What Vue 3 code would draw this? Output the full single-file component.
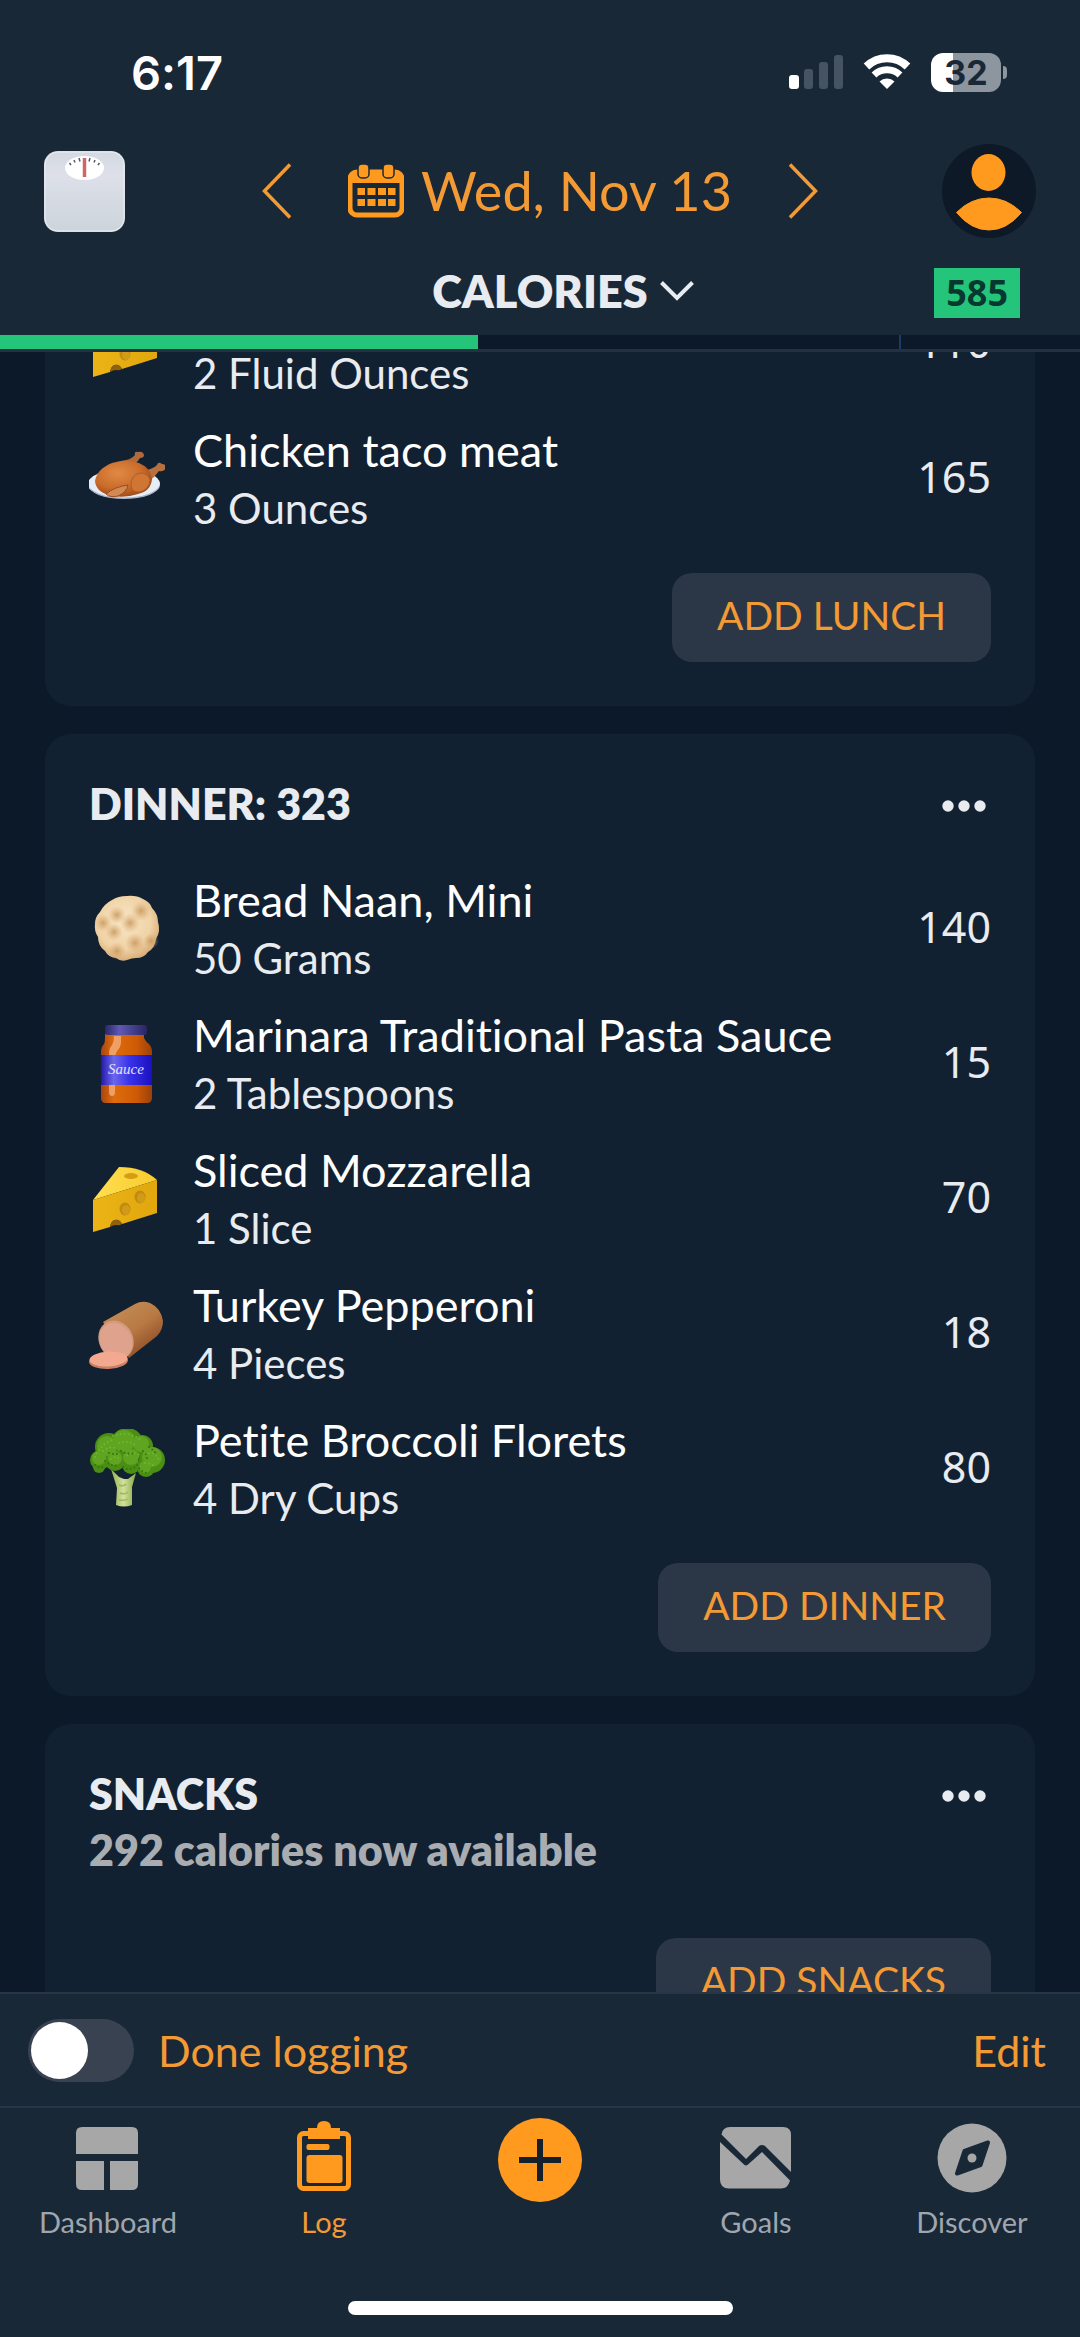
<script setup>
import { ref } from 'vue'

const doneLogging = ref(false)

const meals = [
  {
    id: 'lunch',
    items: [
      { icon: 'cheese', name: '', amount: '2 Fluid Ounces', calories: 110 },
      { icon: 'chicken', name: 'Chicken taco meat', amount: '3 Ounces', calories: 165 },
    ],
    action: 'ADD LUNCH',
  },
  {
    id: 'dinner',
    title: 'DINNER: 323',
    items: [
      { icon: 'naan', name: 'Bread Naan, Mini', amount: '50 Grams', calories: 140 },
      { icon: 'sauce', name: 'Marinara Traditional Pasta Sauce', amount: '2 Tablespoons', calories: 15 },
      { icon: 'cheese', name: 'Sliced Mozzarella', amount: '1 Slice', calories: 70 },
      { icon: 'sausage', name: 'Turkey Pepperoni', amount: '4 Pieces', calories: 18 },
      { icon: 'broccoli', name: 'Petite Broccoli Florets', amount: '4 Dry Cups', calories: 80 },
    ],
    action: 'ADD DINNER',
  },
  {
    id: 'snacks',
    title: 'SNACKS',
    note: '292 calories now available',
    items: [],
    action: 'ADD SNACKS',
  },
]

const budget = { eaten: 44.3, mark: 83.2 }
</script>

<template>
  <div class="app">
    <svg class="defs" width="0" height="0" aria-hidden="true">
      <defs>
        <linearGradient id="scaleBody" x1="0" y1="0" x2="0" y2="1">
          <stop offset="0" stop-color="#d3d8e1" />
          <stop offset=".3" stop-color="#dde0e9" />
          <stop offset="1" stop-color="#ccd4da" />
        </linearGradient>
        <radialGradient id="naanFill" cx=".45" cy=".4" r=".6">
          <stop offset="0" stop-color="#f8e6c6" />
          <stop offset=".7" stop-color="#f0d3a6" />
          <stop offset="1" stop-color="#d9ae78" />
        </radialGradient>
        <radialGradient id="naanSpot">
          <stop offset="0" stop-color="#c8965d" stop-opacity=".85" />
          <stop offset="1" stop-color="#d9ab74" stop-opacity="0" />
        </radialGradient>
        <linearGradient id="jarSauce">
          <stop offset="0" stop-color="#a94410" />
          <stop offset=".25" stop-color="#de6c0c" />
          <stop offset=".7" stop-color="#cf5a05" />
          <stop offset="1" stop-color="#9c4009" />
        </linearGradient>
        <linearGradient id="jarLabel">
          <stop offset="0" stop-color="#2318a8" />
          <stop offset=".25" stop-color="#6c67ec" />
          <stop offset=".55" stop-color="#3a33ea" />
          <stop offset="1" stop-color="#1a10c0" />
        </linearGradient>
        <linearGradient id="jarLid">
          <stop offset="0" stop-color="#2c2668" />
          <stop offset=".35" stop-color="#5f59b4" />
          <stop offset="1" stop-color="#2a2463" />
        </linearGradient>
        <linearGradient id="cheeseTop" x1="0" y1="0" x2="1" y2="0">
          <stop offset="0" stop-color="#ffdf52" />
          <stop offset="1" stop-color="#f8cb2c" />
        </linearGradient>
        <linearGradient id="cheeseSide" x1="0" y1="0" x2="1" y2="0">
          <stop offset="0" stop-color="#ecb416" />
          <stop offset="1" stop-color="#e0a70e" />
        </linearGradient>
        <linearGradient id="sausageSkin" x1=".2" y1=".1" x2=".8" y2=".9">
          <stop offset="0" stop-color="#c28b55" />
          <stop offset=".5" stop-color="#b97a45" />
          <stop offset="1" stop-color="#8a4a24" />
        </linearGradient>
        <linearGradient id="stalk">
          <stop offset="0" stop-color="#8fb24d" />
          <stop offset=".5" stop-color="#d3e09b" />
          <stop offset="1" stop-color="#86a945" />
        </linearGradient>
        <radialGradient id="roast" cx=".4" cy=".35" r=".7">
          <stop offset="0" stop-color="#e08a45" />
          <stop offset=".6" stop-color="#cb6c2a" />
          <stop offset="1" stop-color="#98481a" />
        </radialGradient>
      </defs>
    </svg>

    <header class="header">
      <div class="status">
        <span class="clock">6:17</span>
        <div class="indicators">
          <svg width="54" height="36" viewBox="0 0 54 36" aria-hidden="true">
            <rect x="0" y="21" width="10" height="14" rx="3" fill="#fff" />
            <rect x="15" y="15" width="9" height="20" rx="3" fill="#465362" />
            <rect x="30" y="8" width="9" height="27" rx="3" fill="#465362" />
            <rect x="45" y="1" width="9" height="34" rx="3" fill="#465362" />
          </svg>
          <svg width="48" height="36" viewBox="0 0 48 36" fill="none" aria-hidden="true">
            <path d="M3.500 12.500a29.500 29.500 0 0 1 41 0" stroke="#fff" stroke-width="8" />
            <path d="M11 21a19 19 0 0 1 26 0" stroke="#fff" stroke-width="7" />
            <path d="M24 35l-7.500-7.500a11 11 0 0 1 15 0z" fill="#fff" />
          </svg>
          <div class="battery"><span>32</span></div>
        </div>
      </div>

      <div class="daterow">
        <button class="plain scale" aria-label="Weigh in">
          <svg width="81" height="81" viewBox="0 0 81 81" aria-hidden="true">
            <rect width="81" height="81" rx="14" fill="url(#scaleBody)" />
            <rect x="1" y="1" width="79" height="79" rx="13" fill="none" stroke="#e9ecf2" stroke-width="1" />
            <ellipse cx="40.500" cy="17" rx="19.500" ry="12" fill="#fff" />
            <path d="M27 14l-1.500-2M31 11.500l-1-2.500M36 10.500l-1-3.500M45 10.500l1-3.500M50 11.500l1-2.500M54 14l1.500-2" stroke="#545b66" stroke-width="1.500" />
            <path d="M40.500 7v19" stroke="#d3646a" stroke-width="3.500" />
          </svg>
        </button>
        <div class="datepick">
          <button class="plain" aria-label="Previous day">
            <svg width="30" height="56" viewBox="0 0 30 56" fill="none" aria-hidden="true">
              <path d="M28 1.500L2.500 28 28 54.500" stroke="#f39a35" stroke-width="3.500" />
            </svg>
          </button>
          <button class="plain date">
            <svg width="56" height="54" viewBox="0 0 56 54" aria-hidden="true">
              <rect x="2" y="8" width="52" height="43" rx="7" fill="none" stroke="#ff9a1f" stroke-width="5" />
              <path d="M2 19v-6q0-7 7-7h38q7 0 7 7v6z" fill="#ff9a1f" />
              <g fill="#ff9a1f" stroke="#192837" stroke-width="1.500">
                <rect x="10" y="0" width="11" height="14" rx="4" />
                <rect x="35" y="0" width="11" height="14" rx="4" />
              </g>
              <path d="M9.500 24h7.500v7h-7.500zM19.500 24h8v7h-8zM30 24h8v7h-8zM40 24h7.500v7h-7.500zM9.500 35h7.500v7h-7.500zM19.500 35h8v7h-8zM30 35h8v7h-8zM40 35h7.500v7h-7.500z" fill="#ff9a1f" />
            </svg>
            <span>Wed, Nov 13</span>
          </button>
          <button class="plain" aria-label="Next day">
            <svg width="30" height="56" viewBox="0 0 30 56" fill="none" aria-hidden="true">
              <path d="M2 1.500L27.500 28 2 54.500" stroke="#f39a35" stroke-width="3.500" />
            </svg>
          </button>
        </div>
        <button class="plain avatar" aria-label="Profile">
          <svg width="94" height="94" viewBox="0 0 94 94" aria-hidden="true">
            <circle cx="47" cy="47" r="47" fill="#0d1927" />
            <ellipse cx="46.500" cy="28.500" rx="17" ry="18.500" fill="#ff9a1f" />
            <path d="M14.500 68.500Q29 54 47 54t32.500 14.500Q65 86 47 86T14.500 68.500z" fill="#ff9a1f" stroke="#ff9a1f" stroke-linejoin="round" />
          </svg>
        </button>
      </div>

      <div class="metric">
        <button class="plain metric-name">
          <span>CALORIES</span>
          <svg width="34" height="20" viewBox="0 0 34 20" fill="none" aria-hidden="true">
            <path d="M1.500 1.500L17 17 32.500 1.500" stroke="#e8ebef" stroke-width="4" />
          </svg>
        </button>
        <span class="remaining">585</span>
      </div>

      <div class="progress">
        <div class="progress-fill" :style="{ width: budget.eaten + '%' }"></div>
        <div class="progress-mark" :style="{ left: budget.mark + '%' }"></div>
      </div>
    </header>

    <main class="log">
      <div class="cards">
        <section v-for="meal in meals" :key="meal.id" class="card">
          <div v-if="meal.title" class="card-head">
            <div>
              <h2>{{ meal.title }}</h2>
              <p v-if="meal.note">{{ meal.note }}</p>
            </div>
            <button class="plain more" aria-label="More options">
              <svg width="44" height="12" viewBox="0 0 44 12" fill="#e8ebef" aria-hidden="true">
                <circle cx="6" cy="6" r="5.700" />
                <circle cx="22" cy="6" r="5.700" />
                <circle cx="38" cy="6" r="5.700" />
              </svg>
            </button>
          </div>

          <ul v-if="meal.items.length" class="items">
            <li v-for="item in meal.items" :key="item.amount" class="item">
              <svg class="food" width="76" height="80" viewBox="0 0 76 80" aria-hidden="true">
                <g v-if="item.icon === 'naan'">
                  <path d="M38 7q9-1 16 3 7 3 9 9 6 6 6 14 3 9-2 17-1 9-8 13-4 6-12 6-4 0-9 2-6 2-11-2-8-1-11-7-7-5-7-14-4-6-3-13 0-7 5-12 4-8 12-12 6-4 15-4z" fill="url(#naanFill)" />
                  <circle cx="28" cy="26" r="9" fill="url(#naanSpot)" />
                  <circle cx="52" cy="22" r="10" fill="url(#naanSpot)" />
                  <circle cx="14" cy="34" r="9" fill="url(#naanSpot)" />
                  <circle cx="41" cy="34" r="10" fill="url(#naanSpot)" />
                  <circle cx="25" cy="43" r="9" fill="url(#naanSpot)" />
                  <circle cx="46" cy="54" r="10" fill="url(#naanSpot)" />
                  <circle cx="28" cy="62" r="9" fill="url(#naanSpot)" />
                  <circle cx="62" cy="52" r="8" fill="url(#naanSpot)" />
                </g>
                <g v-else-if="item.icon === 'sauce'">
                  <path d="M16 10h39v4q2 4 5 6 3 3 3 8v46q0 5-5 5H17q-5 0-5-5V28q0-5 3-8 1-2 1-6z" fill="url(#jarSauce)" />
                  <path d="M25 12h7v6q0 5-4 9-2 3-2 8v33q0 4-3 4t-3-4V30q0-6 3-9 2-3 2-9z" fill="#f6b184" opacity=".75" />
                  <rect x="12" y="31" width="51" height="30" fill="url(#jarLabel)" />
                  <rect x="16" y="1" width="42" height="10" rx="3" fill="url(#jarLid)" />
                  <text x="37" y="50" class="jar-text">Sauce</text>
                </g>
                <g v-else-if="item.icon === 'cheese'">
                  <path d="M30 8Q54 8 68 21L4 41z" fill="url(#cheeseTop)" />
                  <path d="M4 41l64-20v33l-35 11q-3-5-7-4-4 1-5 7L4 73z" fill="url(#cheeseSide)" />
                  <path d="M21 68q1-6 5-7 4-1 7 4-3 2-6 1-3 0-6 2z" fill="#8f620b" />
                  <ellipse cx="42" cy="17" rx="7" ry="3" fill="#d49d15" />
                  <ellipse cx="51" cy="38" rx="5.500" ry="6.500" fill="#c18a12" />
                  <ellipse cx="36" cy="50" rx="5.500" ry="6.500" fill="#c18a12" />
                  <ellipse cx="52" cy="39" rx="4" ry="5" fill="#d19a17" />
                  <ellipse cx="37" cy="51" rx="4" ry="5" fill="#d19a17" />
                </g>
                <g v-else-if="item.icon === 'sausage'">
                  <path d="M14 28L46 10q7-4 15-1 11 5 13 18 0 9-6 15L40 64z" fill="url(#sausageSkin)" />
                  <ellipse cx="27" cy="46" rx="17" ry="20" transform="rotate(-28 27 46)" fill="#d59b80" />
                  <ellipse cx="27" cy="47" rx="15.500" ry="18.500" transform="rotate(-28 27 47)" fill="#dfa28c" />
                  <ellipse cx="19.500" cy="67" rx="19.500" ry="8" transform="rotate(-3 19 67)" fill="#c97f62" />
                  <ellipse cx="19.500" cy="65" rx="19" ry="7.500" transform="rotate(-3 19 65)" fill="#f2a98f" />
                </g>
                <g v-else-if="item.icon === 'broccoli'">
                  <path d="M22 40l8 8 5 2h4l8-6-4 14 0 18q-8 3-16 0l1-17z" fill="url(#stalk)" />
                  <path d="M30 56q5 2 7-1M31 64q5 2 8-1M30 71q6 1 9-1" fill="none" stroke="#9db862" stroke-width="1.500" />
                  <g fill="#4a8f14">
                    <circle cx="11" cy="31" r="10" />
                    <circle cx="10" cy="38" r="6" />
                    <circle cx="20" cy="18" r="14" />
                    <circle cx="38" cy="16" r="17" />
                    <circle cx="53" cy="17" r="11" />
                    <circle cx="63" cy="31" r="13" />
                    <circle cx="57" cy="39" r="9" />
                    <circle cx="42" cy="36" r="9" />
                    <circle cx="26" cy="32" r="10" />
                  </g>
                  <g fill="#5fa522">
                    <circle cx="18" cy="17" r="10" />
                    <circle cx="35" cy="12" r="11" />
                    <circle cx="52" cy="15" r="8" />
                    <circle cx="63" cy="28" r="10" />
                    <circle cx="10" cy="29" r="7" />
                    <circle cx="42" cy="28" r="8" />
                    <circle cx="26" cy="29" r="7" />
                    <circle cx="56" cy="38" r="6" />
                  </g>
                  <g fill="none" stroke="#74b52f" stroke-width="2" stroke-linecap="round" stroke-dasharray="0 4">
                    <path d="M6 28q6-14 20-18M24 7q14-6 28 4M30 14q10-4 18 4M56 25q9-4 14 6M14 22q8-6 14-2M38 26q6-4 12 0M22 30q4-4 9 0M56 34q6 0 9 3" />
                  </g>
                  <g fill="none" stroke="#37740f" stroke-width="2" stroke-linecap="round" stroke-dasharray="0 4">
                    <path d="M16 32q6 6 14 4M32 22q6 4 14 2M48 36q4 8 12 8M6 36q4 4 8 2M54 22q4 4 4 8M20 24q6 2 10 0M60 18q6 4 8 8M34 38q6 4 12 0" />
                  </g>
                </g>
                <g v-else>
                  <ellipse cx="35" cy="46" rx="36" ry="14" fill="#a9b6c8" />
                  <ellipse cx="35" cy="44.500" rx="36" ry="14" fill="#e6edf6" />
                  <path d="M32 22q10-1 14-6-1-4 3-3 5-1 6 3 0 3-4 3-4 7-12 9z" fill="#b16a3c" />
                  <path d="M54 32q10-2 14-6 1-4 5-1 4 0 4 4-2 4-7 3-4 6-11 11z" fill="#b9703f" />
                  <path d="M6 42q2-12 17-18 15-5 27 0 12 5 13 16-1 12-14 15-12 4-25 2-17-3-18-15z" fill="url(#roast)" />
                  <path d="M42 46q0-10 9-12 8 0 10 7-1 10-11 12-8 0-8-7z" fill="#cf7634" stroke="#b05d28" />
                  <path d="M17 55q8-7 22-9-1 7-10 11-8 2-12-2z" fill="#d28a54" stroke="#9a4c1d" />
                </g>
              </svg>
              <div class="item-text">
                <span class="item-name">{{ item.name }}</span>
                <span class="item-amount">{{ item.amount }}</span>
              </div>
              <span class="item-calories">{{ item.calories }}</span>
            </li>
          </ul>

          <button class="add">{{ meal.action }}</button>
        </section>
      </div>
    </main>

    <footer>
      <div class="actions">
        <label class="toggle">
          <input v-model="doneLogging" type="checkbox" role="switch" />
          <span>Done logging</span>
        </label>
        <button class="plain edit">Edit</button>
      </div>

      <nav class="tabs">
        <a href="#dashboard" class="tab">
          <svg width="84" height="84" viewBox="0 0 84 84" fill="#a7a7a7" aria-hidden="true">
            <path d="M10 36V15q0-6 6-6h50q6 0 6 6v21zM10 43h28v29H16q-6 0-6-6zM44 43h28v23q0 6-6 6H44z" />
          </svg>
          <span>Dashboard</span>
        </a>
        <a href="#log" class="tab active" aria-current="page">
          <svg width="84" height="84" viewBox="0 0 84 84" fill="#ff9a1f" aria-hidden="true">
            <rect x="17.500" y="15.500" width="49" height="55" rx="4" fill="none" stroke="#ff9a1f" stroke-width="5" />
            <path d="M26 10h9q0-7 7-7t7 7h9v11H26z" />
            <rect x="24.500" y="26" width="23" height="6" rx="2" />
            <rect x="24.500" y="37" width="36" height="28" rx="3" />
          </svg>
          <span>Log</span>
        </a>
        <a href="#add" class="tab" aria-label="Add food">
          <svg width="84" height="84" viewBox="0 0 84 84" aria-hidden="true">
            <circle cx="42" cy="42" r="42" fill="#ff9a1f" />
            <path d="M42 21v42M21 42h42" stroke="#14202c" stroke-width="6" />
          </svg>
        </a>
        <a href="#goals" class="tab">
          <svg width="84" height="84" viewBox="0 0 84 84" fill="#a7a7a7" aria-hidden="true">
            <path d="M7.500 16.500Q8.500 9 16 9h53q8 0 8 8v37L51 28q-3-2-6 0L32 41z" />
            <path d="M6 24l24 22.500q2 2 4 0L48 34l28 28.500q-2 8-9 8H15q-9 0-9-9z" />
          </svg>
          <span>Goals</span>
        </a>
        <a href="#discover" class="tab">
          <svg width="84" height="84" viewBox="0 0 84 84" aria-hidden="true">
            <circle cx="42" cy="40" r="34.500" fill="#a7a7a7" />
            <path d="M58 24.500L50.500 47 27 55.500 34.500 33z" fill="#192837" stroke="#192837" stroke-width="4" stroke-linejoin="round" />
            <circle cx="42" cy="40" r="4.500" fill="#a7a7a7" />
          </svg>
          <span>Discover</span>
        </a>
      </nav>
      <div class="home-bar"></div>
    </footer>
  </div>
</template>

<style>
body {
  margin: 0;
  background: #0c1928;
}
</style>

<style scoped>
.app {
  display: flex;
  flex-direction: column;
  height: 100vh;
  overflow: hidden;
  background: #0c1928;
  color: #e8ebef;
  font-family: Lato, "Noto Sans", sans-serif;
  font-variant-ligatures: none;
}

.defs {
  position: absolute;
}

svg {
  display: block;
  flex: none;
}

.plain {
  padding: 0;
  border: 0;
  background: none;
  color: inherit;
  font: inherit;
  cursor: pointer;
}

.header {
  position: relative;
  flex: none;
  background: #192837;
  border-bottom: 3px solid #233243;
}

.status {
  display: flex;
  align-items: center;
  justify-content: space-between;
  height: 144px;
  padding: 0 79px 0 131px;
  color: #fff;
  font-family: Inter, sans-serif;
}

.clock {
  font-size: 47px;
  font-weight: 600;
}

.indicators {
  display: flex;
  align-items: center;
  gap: 20px;
}

.battery {
  position: relative;
  width: 70px;
  height: 39px;
  border-radius: 12px;
  background: linear-gradient(90deg, #fff 32%, #8d959f 32%);
  color: #192837;
  font-size: 34px;
  font-weight: 700;
  line-height: 39px;
  text-align: center;
}

.battery::after {
  content: "";
  position: absolute;
  top: 13px;
  right: -6px;
  width: 4px;
  height: 13px;
  border-radius: 0 6px 6px 0;
  background: #8d959f;
}

.daterow {
  display: grid;
  grid-template-columns: 1fr auto 1fr;
  align-items: center;
  padding: 0 44px;
}

.datepick {
  display: flex;
  align-items: center;
  gap: 56px;
}

.date {
  display: flex;
  align-items: center;
  gap: 17px;
  color: #f39a35;
  font-size: 54px;
  line-height: 64px;
}

.scale {
  justify-self: start;
}

.avatar {
  justify-self: end;
}

.metric {
  display: grid;
  grid-template-columns: 1fr auto 1fr;
  align-items: center;
  padding: 30px 60px 17px;
}

.metric-name {
  display: flex;
  align-items: center;
  gap: 12px;
  grid-column: 2;
  padding: 0 0 4px 46px;
  font-size: 45px;
  font-weight: 800;
  line-height: 44px;
}

.remaining {
  justify-self: end;
  padding: 0 12px;
  background: #24c57a;
  color: #07382f;
  font-family: "Noto Sans", sans-serif;
  font-size: 36px;
  font-weight: 700;
  line-height: 50px;
}

.progress {
  position: relative;
  height: 14px;
  background: #0c1928;
}

.progress-fill {
  height: 100%;
  background: #24c57a;
}

.progress-mark {
  position: absolute;
  top: 0;
  width: 2px;
  height: 100%;
  background: #1d3a68;
}

.log {
  flex: 1;
  min-height: 0;
  overflow: hidden;
}

.cards {
  display: flex;
  flex-direction: column;
  gap: 28px;
  margin-top: -76px;
  padding: 0 45px;
}

.card {
  display: flex;
  flex-direction: column;
  padding: 44px;
  border-radius: 26px;
  background: #122131;
}

.card:first-child {
  padding-top: 0;
}

.card-head {
  display: flex;
  align-items: flex-start;
  justify-content: space-between;
  margin-bottom: 31px;
}

h2,
p {
  margin: 0;
  font-size: 43px;
  font-weight: 800;
}

h2 {
  line-height: 52px;
}

p {
  color: #a9adb1;
  line-height: 60px;
}

.more {
  padding: 22px 5px 10px;
}

.items {
  margin: 0;
  padding: 0;
  list-style: none;
}

.item {
  display: flex;
  align-items: center;
  height: 135px;
}

.item-text {
  display: flex;
  flex: 1;
  flex-direction: column;
  margin-left: 28px;
}

.item-name {
  min-height: 58px;
  color: #fff;
  font-size: 45px;
  line-height: 58px;
}

.item-amount {
  font-size: 42px;
  line-height: 58px;
}

.item-calories {
  padding-bottom: 5px;
  font-family: "Noto Sans", sans-serif;
  font-size: 43px;
}

.jar-text {
  fill: #e4e4ff;
  font-family: "Liberation Serif", serif;
  font-size: 15px;
  font-style: italic;
  text-anchor: middle;
}

.add {
  align-self: flex-end;
  height: 89px;
  margin-top: 27px;
  padding: 0 45px 5px;
  border: 0;
  border-radius: 20px;
  background: #2b3746;
  color: #f39a35;
  font-family: inherit;
  font-size: 39px;
  cursor: pointer;
}

footer {
  flex: none;
  background: #192837;
}

.actions {
  display: flex;
  align-items: center;
  justify-content: space-between;
  height: 112px;
  padding: 0 34px 0 28px;
  border-top: 2px solid #273547;
  color: #f39a35;
  font-size: 43px;
}

.toggle {
  display: flex;
  align-items: center;
  gap: 24px;
}

.toggle input {
  appearance: none;
  width: 106px;
  height: 63px;
  margin: 0;
  border-radius: 32px;
  background: #394250;
}

.toggle input::before {
  content: "";
  display: block;
  width: 57px;
  height: 57px;
  margin: 3px;
  border-radius: 50%;
  background: #fff;
}

.toggle input:checked::before {
  margin-left: auto;
}

.tabs {
  display: grid;
  grid-template-columns: repeat(5, 1fr);
  padding-top: 10px;
  border-top: 2px solid #273547;
}

.tab {
  display: flex;
  flex-direction: column;
  align-items: center;
  color: #a0a6ae;
  font-size: 29px;
  line-height: 40px;
  text-decoration: none;
}

.tab.active {
  color: #f39a35;
}

.home-bar {
  width: 385px;
  height: 14px;
  margin: 59px auto 22px;
  border-radius: 7px;
  background: #fff;
}
</style>
